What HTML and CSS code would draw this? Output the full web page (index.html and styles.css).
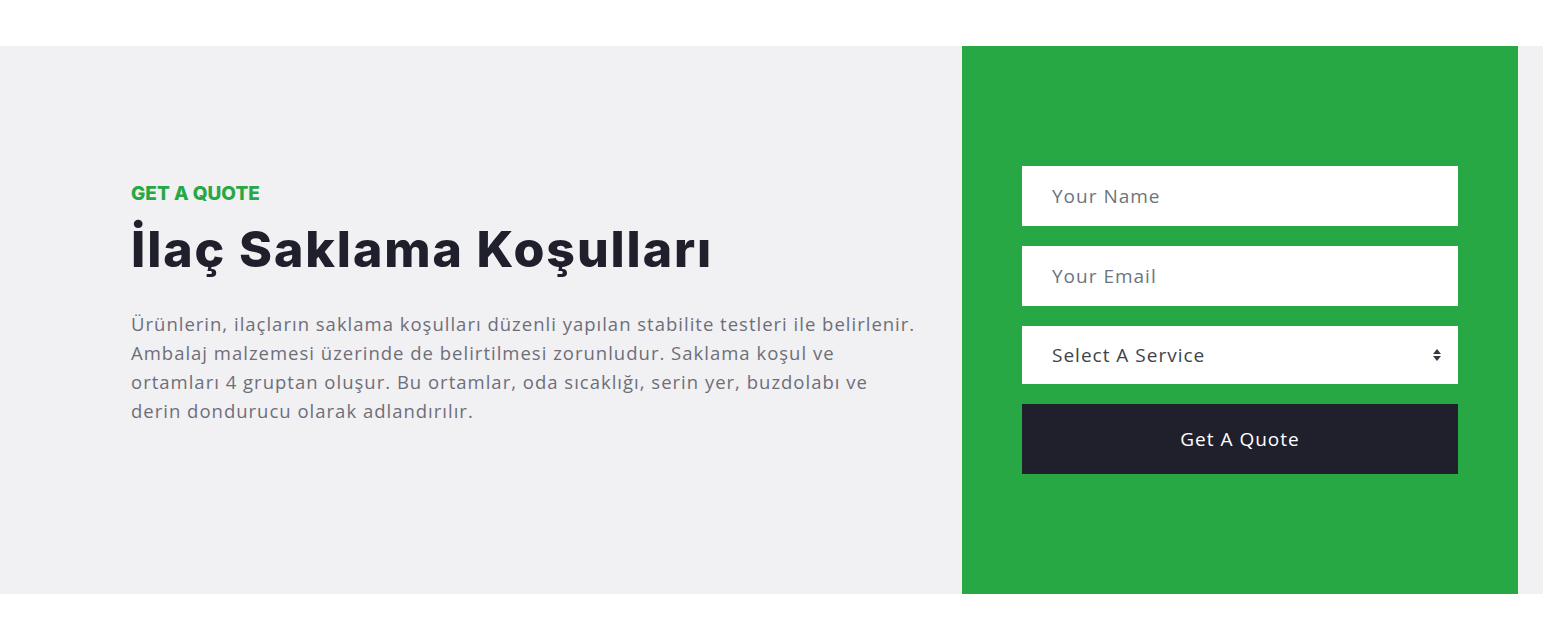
FILE: index.html
```html
<!DOCTYPE html>
<html lang="tr">
<head>
<meta charset="utf-8">
<title>Get A Quote</title>
<link rel="stylesheet" href="styles.css">
</head>
<body>
<section class="quote">
  <div class="quote-text">
    <p class="eyebrow">GET A QUOTE</p>
    <h2 class="title">İlaç Saklama Koşulları</h2>
    <p class="lead">Ürünlerin, ilaçların saklama koşulları düzenli yapılan stabilite testleri ile belirlenir. Ambalaj malzemesi üzerinde de belirtilmesi zorunludur. Saklama koşul ve ortamları 4 gruptan oluşur. Bu ortamlar, oda sıcaklığı, serin yer, buzdolabı ve derin dondurucu olarak adlandırılır.</p>
  </div>
  <div class="quote-form-wrap">
    <form class="quote-form">
      <input class="field" type="text" placeholder="Your Name">
      <input class="field" type="email" placeholder="Your Email">
      <div class="select-wrap">
        <select class="field select">
          <option>Select A Service</option>
        </select>
        <svg class="select-arrow" width="10" height="14" viewBox="0 0 10 14"><path d="M5 1 L9 6 H1 Z" fill="#343a40"/><path d="M1 8 H9 L5 13 Z" fill="#343a40"/></svg>
      </div>
      <button class="btn" type="button">Get A Quote</button>
    </form>
  </div>
</section>
</body>
</html>
```

FILE: styles.css
```css
* { box-sizing: border-box; }
html, body { margin: 0; padding: 0; background: #fff; }
body { font-family: "Open Sans", "Liberation Sans", sans-serif; }

.quote {
  margin-top: 46px;
  background: #f1f1f3;
  display: grid;
  grid-template-columns: 962px 556px 1fr;
  height: 548px;
}

.quote-text {
  padding: 136px 0 0 131px;
}

.eyebrow {
  margin: 0;
  font-family: "Inter", sans-serif;
  font-weight: 800;
  font-size: 19px;
  color: #28a745;
  line-height: 24px;
}

.title {
  margin: 11px 0 0;
  font-family: "Inter", sans-serif;
  font-weight: 800;
  font-size: 50px;
  line-height: 64px;
  color: #20202d;
  letter-spacing: 1.9px;
}

.lead {
  margin: 28px 0 0;
  max-width: 790px;
  font-size: 18.5px;
  letter-spacing: 1px;
  line-height: 29px;
  color: #6e6e7a;
}

.quote-form-wrap {
  background: #28a745;
  padding: 120px 60px;
}

.quote-form {
  display: flex;
  flex-direction: column;
  gap: 20px;
}

.field {
  display: block;
  width: 100%;
  height: 60px;
  border: 0;
  border-radius: 0;
  background: #fff;
  padding: 0 30px;
  font-family: "Open Sans", "Liberation Sans", sans-serif;
  font-size: 19px;
  letter-spacing: 1px;
  color: #495057;
  outline: none;
}
.field::placeholder { color: #6c757d; }

.select-wrap { position: relative; }
.select { height: 58px; appearance: none; -webkit-appearance: none; color: #3e4349; }
.select-arrow { position: absolute; right: 16px; top: 22px; }

.btn {
  height: 70px;
  border: 0;
  background: #20202d;
  color: #fff;
  font-family: "Open Sans", "Liberation Sans", sans-serif;
  font-size: 19px;
  letter-spacing: 1px;
  font-weight: 500;
  cursor: pointer;
}
```
